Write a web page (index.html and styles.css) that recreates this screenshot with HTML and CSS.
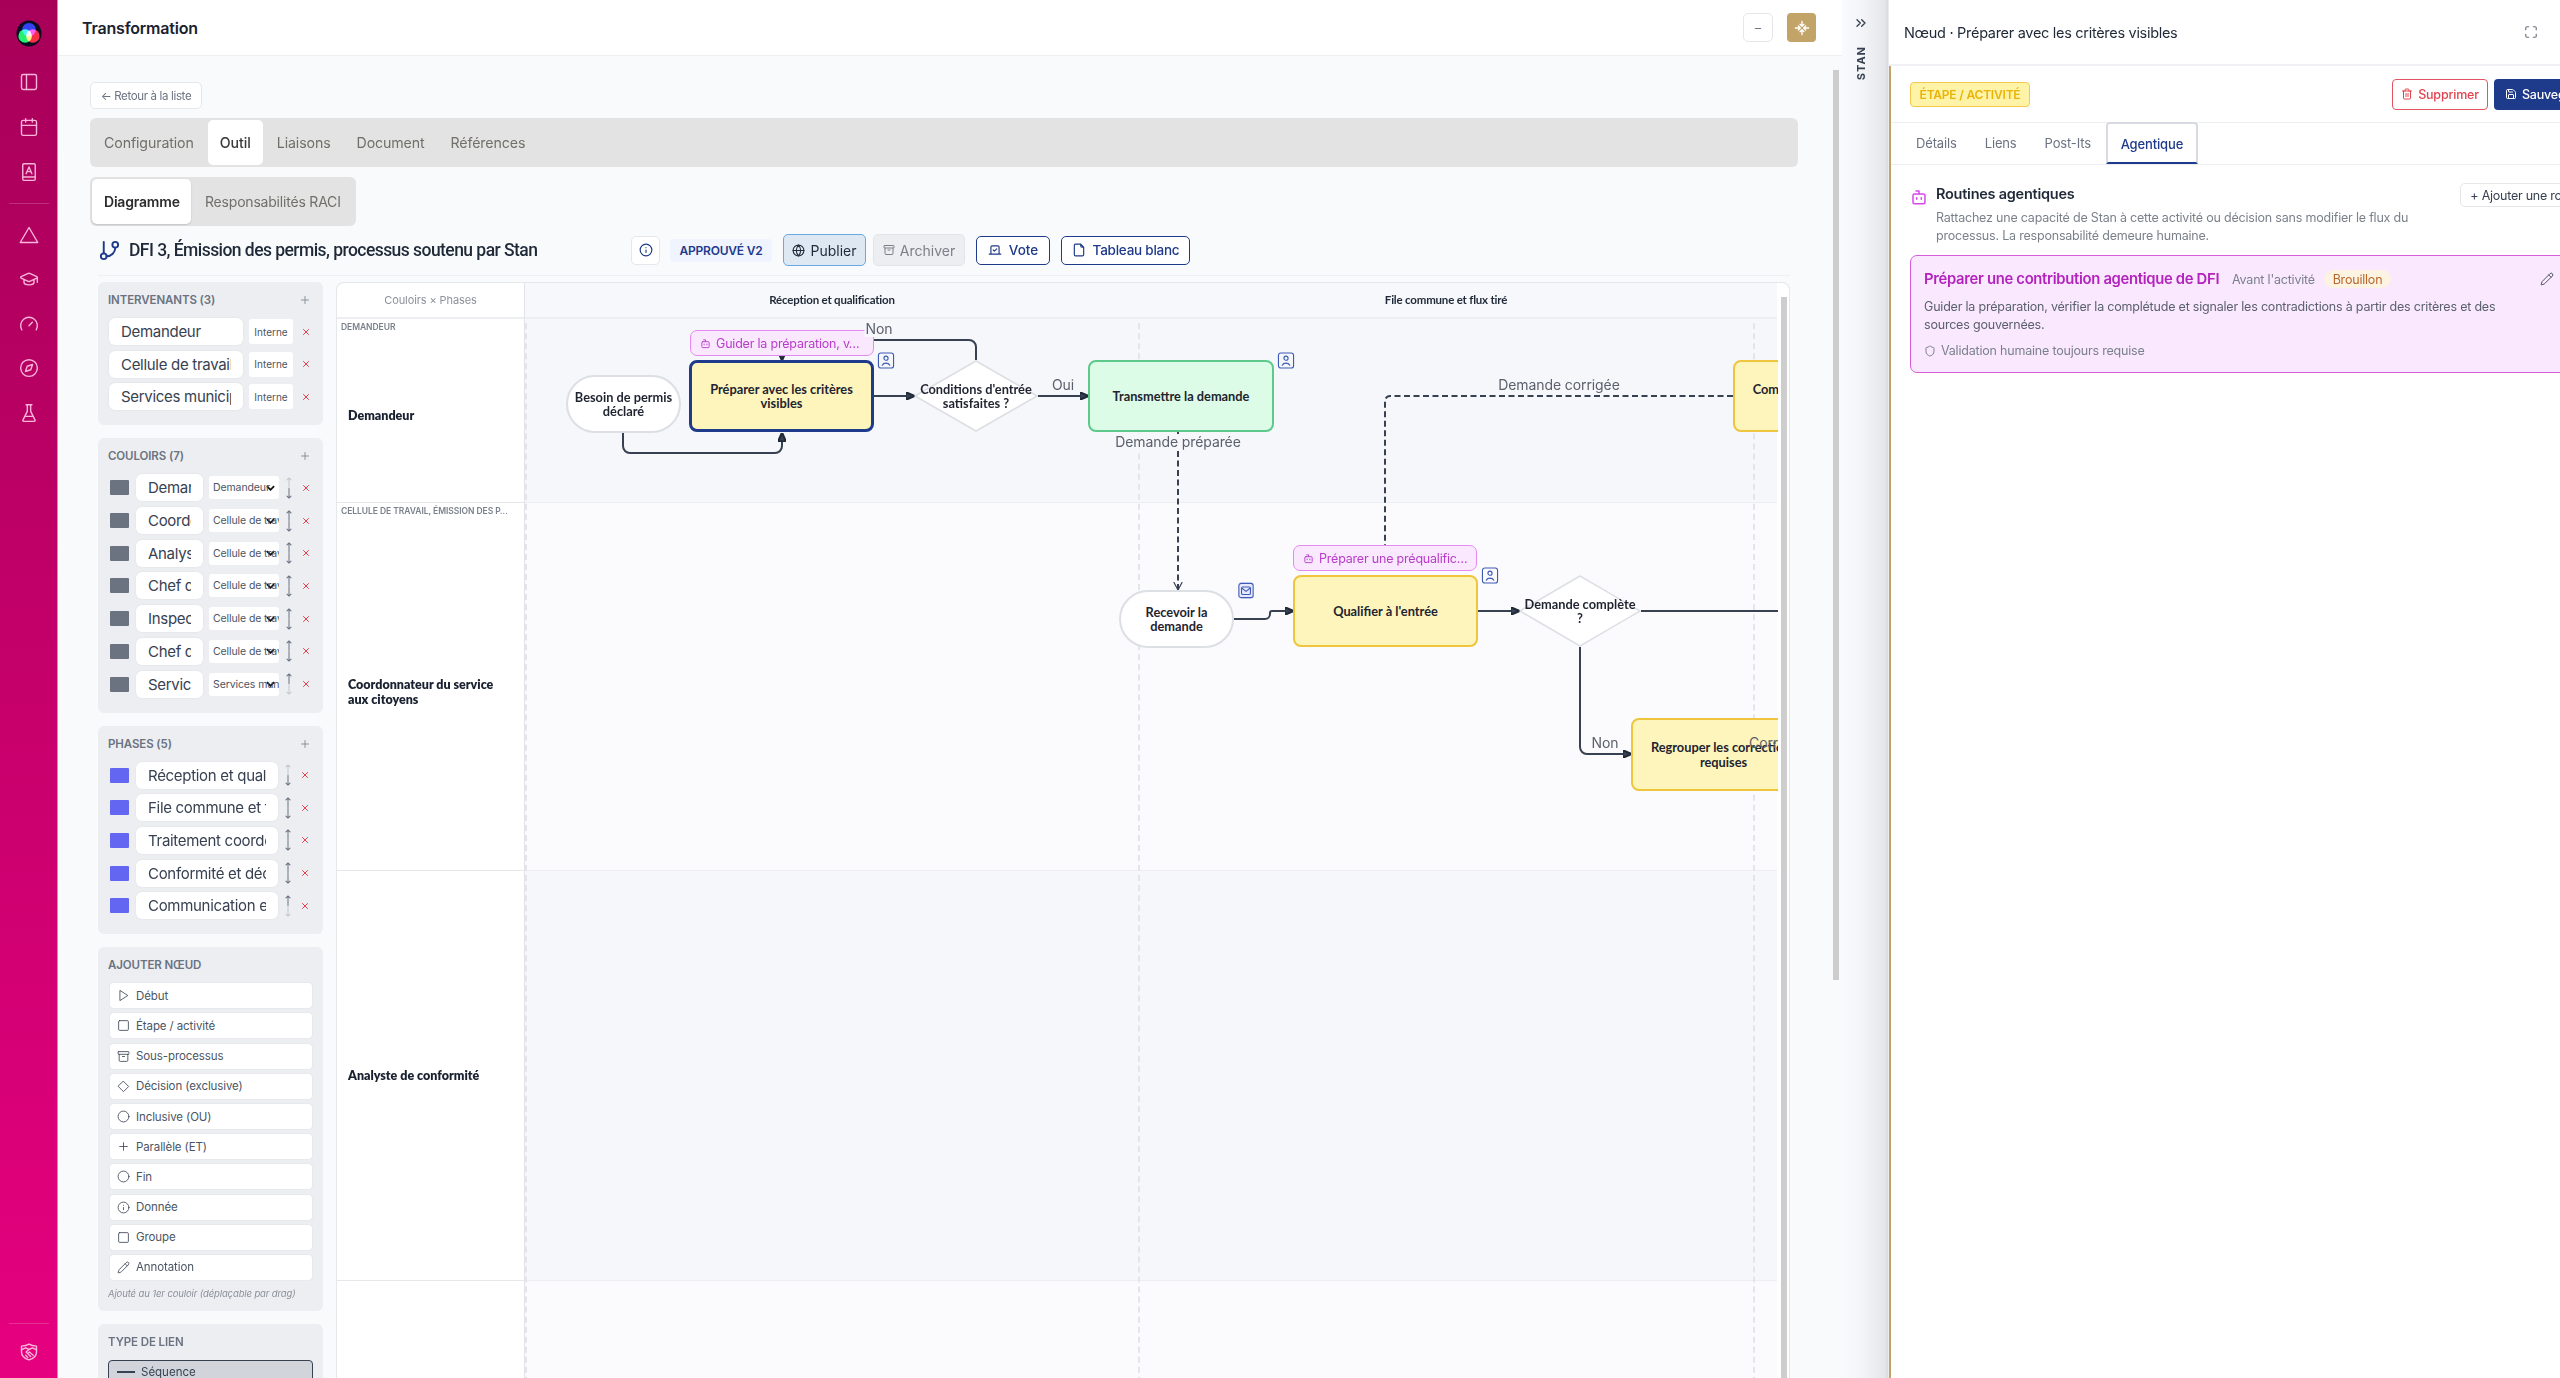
FILE: index.html
```html
<!DOCTYPE html>
<html lang="fr">
<head>
<meta charset="utf-8">
<title>Transformation</title>
<link rel="stylesheet" href="styles.css">
</head>
<body>
<svg class="sprite" aria-hidden="true">
  <symbol id="i-panel" viewBox="0 0 24 24"><rect x="3" y="3" width="18" height="18" rx="2"/><path d="M9 3v18"/></symbol>
  <symbol id="i-cal" viewBox="0 0 24 24"><rect x="3" y="4" width="18" height="18" rx="2"/><path d="M16 2v4M8 2v4M3 10h18"/></symbol>
  <symbol id="i-book" viewBox="0 0 24 24"><rect x="4.5" y="2" width="15" height="20" rx="1.5"/><path d="M4.5 18h15M8.5 14l3.500-8 3.500 8M9.800 11.500h4.400"/></symbol>
  <symbol id="i-tri" viewBox="0 0 24 24"><path d="M12 3 22.500 21h-21z"/></symbol>
  <symbol id="i-cap" viewBox="0 0 24 24"><path d="M21.420 10.922a1 1 0 0 0-.019-1.838L12.830 5.180a2 2 0 0 0-1.660 0L2.600 9.080a1 1 0 0 0 0 1.832l8.570 3.908a2 2 0 0 0 1.660 0zM22 10v6M6 12.500V16a6 3 0 0 0 12 0v-3.500"/></symbol>
  <symbol id="i-gauge" viewBox="0 0 24 24"><path d="m12 14 4-4M3.340 19a10 10 0 1 1 17.320 0"/></symbol>
  <symbol id="i-compass" viewBox="0 0 24 24"><circle cx="12" cy="12" r="10"/><path d="M16.240 7.760 14.120 14.120 7.760 16.240 9.880 9.880z"/></symbol>
  <symbol id="i-flask" viewBox="0 0 24 24"><path d="M10 2v7.527a2 2 0 0 1-.211.896L4.720 20.550a1 1 0 0 0 .9 1.450h12.760a1 1 0 0 0 .9-1.450l-5.069-10.127A2 2 0 0 1 14 9.527V2M8.500 2h7M7 16h10"/></symbol>
  <symbol id="i-shake" viewBox="0 0 24 24"><path d="M12 2.500c2.500 1.600 5.500 2.300 9 2.500v7c0 5-3.800 8-9 9.500C6.800 20 3 17 3 12V5c3.500-.2 6.500-.9 9-2.500z"/><path d="M3.500 9 8 7l4 2 4-2 4.500 2M12 9l-3.500 3 1.500 1.500 2.500-1.500 4.500 4M8 16l2.500 2.500M11 14.500l3 3"/></symbol>
  <symbol id="i-branch" viewBox="0 0 24 24"><path d="M6 3v12M18 9a9 9 0 0 1-9 9"/><circle cx="18" cy="6" r="3"/><circle cx="6" cy="18" r="3"/></symbol>
  <symbol id="i-info" viewBox="0 0 24 24"><circle cx="12" cy="12" r="10"/><path d="M12 16v-4M12 8h.01"/></symbol>
  <symbol id="i-globe" viewBox="0 0 24 24"><circle cx="12" cy="12" r="10"/><path d="M2 12h20M12 2a15.300 15.300 0 0 1 4 10 15.300 15.300 0 0 1-4 10 15.300 15.300 0 0 1-4-10 15.300 15.300 0 0 1 4-10z"/></symbol>
  <symbol id="i-archive" viewBox="0 0 24 24"><rect x="2" y="3" width="20" height="5" rx="1"/><path d="M4 8v11a2 2 0 0 0 2 2h12a2 2 0 0 0 2-2V8M10 12h4"/></symbol>
  <symbol id="i-vote" viewBox="0 0 24 24"><path d="m9 12 2 2 4-4M5 7a2 2 0 0 1 2-2h10a2 2 0 0 1 2 2v12H5zM22 19H2"/></symbol>
  <symbol id="i-page" viewBox="0 0 24 24"><path d="M15 2H6a2 2 0 0 0-2 2v16a2 2 0 0 0 2 2h12a2 2 0 0 0 2-2V7zM15 2v3a2 2 0 0 0 2 2h3"/></symbol>
  <symbol id="i-bot" viewBox="0 0 24 24"><path d="M12 8V4H8"/><rect x="4" y="8" width="16" height="13" rx="2"/><path d="M15 13v2M9 13v2"/></symbol>
  <symbol id="i-person" viewBox="0 0 18 18"><rect x="1" y="1" width="16" height="16" rx="2.500"/><circle cx="9" cy="6.500" r="2.200"/><path d="M5 14c1.500-3 6.500-3 8 0"/></symbol>
  <symbol id="i-mail" viewBox="0 0 18 18"><rect x="1" y="1" width="16" height="16" rx="2.500"/><rect x="4" y="5" width="10" height="8.500" rx="1.500"/><path d="m4.500 6.500 4.500 3.500 4.500-3.500"/></symbol>
  <symbol id="i-shrink" viewBox="0 0 24 24"><path d="M12 2v7M9 6.500 12 9.500l3-3M12 22v-7M9 17.500l3-3 3 3M2 12h7M6.500 9l3 3-3 3M22 12h-7M17.500 9l-3 3 3 3"/></symbol>
  <symbol id="i-full" viewBox="0 0 24 24"><path d="M8 3H5a2 2 0 0 0-2 2v3M21 8V5a2 2 0 0 0-2-2h-3M3 16v3a2 2 0 0 0 2 2h3M16 21h3a2 2 0 0 0 2-2v-3"/></symbol>
  <symbol id="i-trash" viewBox="0 0 24 24"><path d="M3 6h18M19 6v14a2 2 0 0 1-2 2H7a2 2 0 0 1-2-2V6M8 6V4a2 2 0 0 1 2-2h4a2 2 0 0 1 2 2v2M10 11v6M14 11v6"/></symbol>
  <symbol id="i-save" viewBox="0 0 24 24"><path d="M15.200 3a2 2 0 0 1 1.400.6l3.800 3.800a2 2 0 0 1 .6 1.400V19a2 2 0 0 1-2 2H5a2 2 0 0 1-2-2V5a2 2 0 0 1 2-2zM17 21v-7a1 1 0 0 0-1-1H8a1 1 0 0 0-1 1v7M7 3v4a1 1 0 0 0 1 1h7"/></symbol>
  <symbol id="i-shield" viewBox="0 0 24 24"><path d="M20 13c0 5-3.500 7.500-7.660 8.950a1 1 0 0 1-.67-.01C7.500 20.500 4 18 4 13V6a1 1 0 0 1 1-1c2 0 4.500-1.200 6.240-2.720a1.170 1.170 0 0 1 1.520 0C14.510 3.810 17 5 19 5a1 1 0 0 1 1 1z"/></symbol>
  <symbol id="i-pen" viewBox="0 0 24 24"><path d="M21.174 6.812a1 1 0 0 0-3.986-3.987L3.842 16.174a2 2 0 0 0-.5.830l-1.321 4.352a.5.5 0 0 0 .623.622l4.353-1.320a2 2 0 0 0 .830-.497zM15 5l4 4"/></symbol>
  <symbol id="i-play" viewBox="0 0 24 24"><path d="M6 3l14 9-14 9z"/></symbol>
  <symbol id="i-square" viewBox="0 0 24 24"><rect x="3" y="3" width="18" height="18" rx="2"/></symbol>
  <symbol id="i-diamond" viewBox="0 0 24 24"><path d="M12 2.500 21.500 12 12 21.500 2.500 12z"/></symbol>
  <symbol id="i-circle" viewBox="0 0 24 24"><circle cx="12" cy="12" r="10"/></symbol>
  <symbol id="i-plus" viewBox="0 0 24 24"><path d="M5 12h14M12 5v14"/></symbol>
  <symbol id="i-x" viewBox="0 0 24 24"><path d="M18 6 6 18M6 6l12 12"/></symbol>
  <symbol id="i-chev" viewBox="0 0 24 24"><path d="m6 17 5-5-5-5M13 17l5-5-5-5"/></symbol>
  <symbol id="i-arr-up" viewBox="0 0 8 12"><path d="M4 11.500V1M1.800 3.200 4 1l2.200 2.200"/></symbol>
  <symbol id="i-arr-down" viewBox="0 0 8 12"><path d="M4 .5V11M1.800 8.800 4 11l2.200-2.200"/></symbol>
</svg>

<div class="app">
  <nav class="rail">
    <div class="logo">
      <svg viewBox="0 0 26 28" class="logo-svg">
        <ellipse cx="13" cy="14" rx="13" ry="13.500" fill="#0b0b22"/>
        <circle class="lc" cx="13" cy="10" r="7" fill="#2a3bf0"/>
        <circle class="lc" cx="9" cy="16.500" r="7" fill="#1bf05a"/>
        <circle class="lc" cx="17" cy="16.500" r="7" fill="#f8262a"/>
      </svg>
    </div>
    <div class="rail-group g1">
      <svg class="ri"><use href="#i-panel"/></svg>
      <svg class="ri"><use href="#i-cal"/></svg>
      <svg class="ri"><use href="#i-book"/></svg>
    </div>
    <div class="rail-sep s1"></div>
    <div class="rail-group g2">
      <svg class="ri"><use href="#i-tri"/></svg>
      <svg class="ri"><use href="#i-cap"/></svg>
      <svg class="ri"><use href="#i-gauge"/></svg>
      <svg class="ri"><use href="#i-compass"/></svg>
      <svg class="ri"><use href="#i-flask"/></svg>
    </div>
    <div class="rail-foot">
      <div class="rail-sep"></div>
      <svg class="ri"><use href="#i-shake"/></svg>
    </div>
  </nav>

  <main class="main">
    <header class="topbar">
      <h1 class="page-title">Transformation</h1>
      <div class="top-actions">
        <button class="btn-min">–</button>
        <button class="btn-gold"><svg class="ic16"><use href="#i-shrink"/></svg></button>
      </div>
    </header>
    <div class="body">
      <button class="back">← Retour à la liste</button>
      <div class="tabs">
        <span class="tab">Configuration</span>
        <span class="tab on">Outil</span>
        <span class="tab">Liaisons</span>
        <span class="tab">Document</span>
        <span class="tab">Références</span>
      </div>
      <div class="subtabs">
        <span class="subtab on">Diagramme</span>
        <span class="subtab">Responsabilités RACI</span>
      </div>
      <div class="titlerow">
        <svg class="branch"><use href="#i-branch"/></svg>
        <h2 class="doc-title">DFI 3, Émission des permis, processus soutenu par Stan</h2>
        <div class="title-actions">
          <button class="btn-info"><svg class="ic14"><use href="#i-info"/></svg></button>
          <span class="badge-ok">APPROUVÉ V2</span>
          <button class="btn-pub"><svg class="ic13"><use href="#i-globe"/></svg>Publier</button>
          <button class="btn-arch"><svg class="ic12"><use href="#i-archive"/></svg>Archiver</button>
          <button class="btn-line vote"><svg class="ic14"><use href="#i-vote"/></svg>Vote</button>
          <button class="btn-line board"><svg class="ic14"><use href="#i-page"/></svg>Tableau blanc</button>
        </div>
      </div>

      <div class="work">
        <aside class="tools">
          <section class="box">
            <div class="box-h"><span>INTERVENANTS (3)</span><svg class="ic12 plus"><use href="#i-plus"/></svg></div>
            <div class="rows">
              <div class="row">
                <input class="inp w-actor" value="Demandeur"><select class="sel-plain"><option>Interne</option></select><svg class="ic10 del"><use href="#i-x"/></svg>
              </div>
              <div class="row">
                <input class="inp w-actor" value="Cellule de travail, Émission"><select class="sel-plain"><option>Interne</option></select><svg class="ic10 del"><use href="#i-x"/></svg>
              </div>
              <div class="row">
                <input class="inp w-actor" value="Services municipaux"><select class="sel-plain"><option>Interne</option></select><svg class="ic10 del"><use href="#i-x"/></svg>
              </div>
            </div>
          </section>

          <section class="box">
            <div class="box-h"><span>COULOIRS (7)</span><svg class="ic12 plus"><use href="#i-plus"/></svg></div>
            <div class="rows">
              <div class="row"><i class="sw gray"></i><input class="inp w-lane" value="Demandeur"><select class="sel"><option>Demandeur</option></select><span class="mv"><svg class="fade"><use href="#i-arr-up"/></svg><svg><use href="#i-arr-down"/></svg></span><svg class="ic10 del"><use href="#i-x"/></svg></div>
              <div class="row"><i class="sw gray"></i><input class="inp w-lane" value="Coordonnateur"><select class="sel"><option>Cellule de travail</option></select><span class="mv"><svg><use href="#i-arr-up"/></svg><svg><use href="#i-arr-down"/></svg></span><svg class="ic10 del"><use href="#i-x"/></svg></div>
              <div class="row"><i class="sw gray"></i><input class="inp w-lane" value="Analyste de conformité"><select class="sel"><option>Cellule de travail</option></select><span class="mv"><svg><use href="#i-arr-up"/></svg><svg><use href="#i-arr-down"/></svg></span><svg class="ic10 del"><use href="#i-x"/></svg></div>
              <div class="row"><i class="sw gray"></i><input class="inp w-lane" value="Chef de service"><select class="sel"><option>Cellule de travail</option></select><span class="mv"><svg><use href="#i-arr-up"/></svg><svg><use href="#i-arr-down"/></svg></span><svg class="ic10 del"><use href="#i-x"/></svg></div>
              <div class="row"><i class="sw gray"></i><input class="inp w-lane" value="Inspecteur"><select class="sel"><option>Cellule de travail</option></select><span class="mv"><svg><use href="#i-arr-up"/></svg><svg><use href="#i-arr-down"/></svg></span><svg class="ic10 del"><use href="#i-x"/></svg></div>
              <div class="row"><i class="sw gray"></i><input class="inp w-lane" value="Chef de division"><select class="sel"><option>Cellule de travail</option></select><span class="mv"><svg><use href="#i-arr-up"/></svg><svg><use href="#i-arr-down"/></svg></span><svg class="ic10 del"><use href="#i-x"/></svg></div>
              <div class="row"><i class="sw gray"></i><input class="inp w-lane" value="Services municipaux"><select class="sel"><option>Services municipaux</option></select><span class="mv"><svg><use href="#i-arr-up"/></svg><svg class="fade"><use href="#i-arr-down"/></svg></span><svg class="ic10 del"><use href="#i-x"/></svg></div>
            </div>
          </section>

          <section class="box">
            <div class="box-h"><span>PHASES (5)</span><svg class="ic12 plus"><use href="#i-plus"/></svg></div>
            <div class="rows">
              <div class="row"><i class="sw blue"></i><input class="inp w-phase" value="Réception et qualification"><span class="mv"><svg class="fade"><use href="#i-arr-up"/></svg><svg><use href="#i-arr-down"/></svg></span><svg class="ic10 del"><use href="#i-x"/></svg></div>
              <div class="row"><i class="sw blue"></i><input class="inp w-phase" value="File commune et flux tiré"><span class="mv"><svg><use href="#i-arr-up"/></svg><svg><use href="#i-arr-down"/></svg></span><svg class="ic10 del"><use href="#i-x"/></svg></div>
              <div class="row"><i class="sw blue"></i><input class="inp w-phase" value="Traitement coordonné"><span class="mv"><svg><use href="#i-arr-up"/></svg><svg><use href="#i-arr-down"/></svg></span><svg class="ic10 del"><use href="#i-x"/></svg></div>
              <div class="row"><i class="sw blue"></i><input class="inp w-phase" value="Conformité et décision"><span class="mv"><svg><use href="#i-arr-up"/></svg><svg><use href="#i-arr-down"/></svg></span><svg class="ic10 del"><use href="#i-x"/></svg></div>
              <div class="row"><i class="sw blue"></i><input class="inp w-phase" value="Communication et clôture"><span class="mv"><svg><use href="#i-arr-up"/></svg><svg class="fade"><use href="#i-arr-down"/></svg></span><svg class="ic10 del"><use href="#i-x"/></svg></div>
            </div>
          </section>

          <section class="box box-add">
            <div class="box-h"><span>AJOUTER NŒUD</span></div>
            <div class="adds">
              <button class="add"><svg class="ic13"><use href="#i-play"/></svg>Début</button>
              <button class="add"><svg class="ic13"><use href="#i-square"/></svg>Étape / activité</button>
              <button class="add"><svg class="ic13"><use href="#i-archive"/></svg>Sous-processus</button>
              <button class="add"><svg class="ic13"><use href="#i-diamond"/></svg>Décision (exclusive)</button>
              <button class="add"><svg class="ic13"><use href="#i-circle"/></svg>Inclusive (OU)</button>
              <button class="add"><svg class="ic13"><use href="#i-plus"/></svg>Parallèle (ET)</button>
              <button class="add"><svg class="ic13"><use href="#i-circle"/></svg>Fin</button>
              <button class="add"><svg class="ic13"><use href="#i-info"/></svg>Donnée</button>
              <button class="add"><svg class="ic13"><use href="#i-square"/></svg>Groupe</button>
              <button class="add"><svg class="ic13"><use href="#i-pen"/></svg>Annotation</button>
            </div>
            <p class="hint">Ajouté au 1er couloir (déplaçable par drag)</p>
          </section>

          <section class="box">
            <div class="box-h"><span>TYPE DE LIEN</span></div>
            <button class="link-type"><i class="dash"></i>Séquence</button>
          </section>
        </aside>

        <div class="dg">
          <div class="dg-corner">Couloirs × Phases</div>
          <div class="dg-phases">
            <span class="ph">Réception et qualification</span>
            <span class="ph">File commune et flux tiré</span>
          </div>

          <div class="lab"><small>DEMANDEUR</small><strong>Demandeur</strong></div>
          <div class="lane a"></div>
          <div class="lab"><small>CELLULE DE TRAVAIL, ÉMISSION DES P…</small><strong>Coordonnateur du service aux citoyens</strong></div>
          <div class="lane b"></div>
          <div class="lab"><strong>Analyste de conformité</strong></div>
          <div class="lane a"></div>
          <div class="lab"></div>
          <div class="lane b"></div>

          <div class="canvas">
            <i class="vline v1"></i><i class="vline v2"></i><i class="vline v3"></i>
            <svg class="edges" viewBox="525 319 1253 1100">
              <defs>
                <marker id="ah" markerWidth="9" markerHeight="8" refX="8.500" refY="4" orient="auto" markerUnits="userSpaceOnUse"><path d="M0 0 9 4 0 8z" fill="#374151"/></marker>
                <marker id="oh" markerWidth="9" markerHeight="10" refX="8.500" refY="5" orient="auto" markerUnits="userSpaceOnUse"><path d="M1 1 8.500 5 1 9" fill="none" stroke="#374151" stroke-width="1.200"/></marker>
              </defs>
              <path class="e" d="M623 433v13a7 7 0 0 0 7 7h145a7 7 0 0 0 7-7v-13" marker-end="url(#ah)"/>
              <path class="e" d="M874 396h40" marker-end="url(#ah)"/>
              <path class="e" d="M976 360v-13a7 7 0 0 0-7-7H782v20" marker-end="url(#ah)"/>
              <path class="e" d="M1038 396h50" marker-end="url(#ah)"/>
              <path class="e dashed" d="M1178 432V590" marker-end="url(#oh)"/>
              <path class="e dashed" d="M1733 396H1390a5 5 0 0 0-5 5v144"/>
              <path class="e" d="M1234 619h31a5 5 0 0 0 5-5v-1a2 2 0 0 1 2-2h21" marker-end="url(#ah)"/>
              <path class="e" d="M1478 611h41" marker-end="url(#ah)"/>
              <path class="e" d="M1641 611H1778"/>
              <path class="e" d="M1580 647v100a7 7 0 0 0 7 7h44" marker-end="url(#ah)"/>
            </svg>

            <div class="node pill n1">Besoin de permis déclaré</div>
            <div class="node task sel-node n2">Préparer avec les critères visibles</div>
            <div class="tag t1"><svg class="ic11"><use href="#i-bot"/></svg><span>Guider la préparation, v…</span></div>
            <svg class="pb b1"><use href="#i-person"/></svg>
            <div class="node diamond n3"><svg viewBox="0 0 124 72" preserveAspectRatio="none"><path d="M62 1 123 36 62 71 1 36z"/></svg><span>Conditions d'entrée satisfaites ?</span></div>
            <div class="node green n4">Transmettre la demande</div>
            <svg class="pb b2"><use href="#i-person"/></svg>
            <div class="node task n5">Compléter les corrections demandées</div>
            <div class="node pill n6">Recevoir la demande</div>
            <svg class="pb b3"><use href="#i-mail"/></svg>
            <div class="node task n7">Qualifier à l'entrée</div>
            <div class="tag t2"><svg class="ic11"><use href="#i-bot"/></svg><span>Préparer une préqualific…</span></div>
            <svg class="pb b4"><use href="#i-person"/></svg>
            <div class="node diamond n8"><svg viewBox="0 0 124 72" preserveAspectRatio="none"><path d="M62 1 123 36 62 71 1 36z"/></svg><span>Demande complète<br>?</span></div>
            <div class="node task n9">Regrouper les corrections requises</div>

            <span class="el l1">Non</span>
            <span class="el l2">Oui</span>
            <span class="el l3">Demande préparée</span>
            <span class="el l4">Demande corrigée</span>
            <span class="el l5">Non</span>
            <span class="el l6">Corrections</span>
          </div>
          <div class="dg-scroll"><i></i></div>
        </div>
      </div>
    </div>
    <div class="main-scroll"><i></i></div>
  </main>

  <div class="stan">
    <svg class="chev"><use href="#i-chev"/></svg>
    <span class="stan-t">STAN</span>
  </div>

  <aside class="panel">
    <header class="p-head">
      <span>Nœud · Préparer avec les critères visibles</span>
      <svg class="ic14 full"><use href="#i-full"/></svg>
    </header>
    <div class="p-wrap">
      <div class="p-bar">
        <span class="p-badge">ÉTAPE / ACTIVITÉ</span>
        <div class="p-btns">
          <button class="b-del"><svg class="ic12"><use href="#i-trash"/></svg>Supprimer</button>
          <button class="b-save"><svg class="ic12"><use href="#i-save"/></svg>Sauvegarder</button>
        </div>
      </div>
      <div class="p-tabs">
        <span class="p-tab">Détails</span>
        <span class="p-tab">Liens</span>
        <span class="p-tab">Post-Its</span>
        <span class="p-tab on">Agentique</span>
      </div>
      <div class="p-body">
        <div class="r-head">
          <svg class="r-bot"><use href="#i-bot"/></svg>
          <div class="r-txt">
            <h3>Routines agentiques</h3>
            <p>Rattachez une capacité de Stan à cette activité ou décision sans modifier le flux du processus. La responsabilité demeure humaine.</p>
          </div>
          <button class="b-add">+ Ajouter une routine</button>
        </div>
        <article class="card">
          <div class="card-h">
            <strong>Préparer une contribution agentique de DFI</strong>
            <span class="when">Avant l'activité</span>
            <span class="draft">Brouillon</span>
            <svg class="ic14 pen"><use href="#i-pen"/></svg>
          </div>
          <p>Guider la préparation, vérifier la complétude et signaler les contradictions à partir des critères et des sources gouvernées.</p>
          <div class="card-f"><svg class="ic12"><use href="#i-shield"/></svg>Validation humaine toujours requise</div>
        </article>
      </div>
    </div>
  </aside>
</div>
</body>
</html>
```

FILE: styles.css
```css
* { box-sizing: border-box; }
html, body { margin: 0; height: 100%; overflow: hidden; }
body { font-family: "Inter", "Liberation Sans", sans-serif; color: #1f2937; background: #fff; }
button, input, select { font-family: inherit; }
.sprite { position: absolute; width: 0; height: 0; }
svg { fill: none; stroke: currentColor; stroke-width: 2; stroke-linecap: round; stroke-linejoin: round; flex: none; }
.ic10 { width: 10px; height: 10px; }
.ic11 { width: 11px; height: 11px; }
.ic12 { width: 12px; height: 12px; }
.ic13 { width: 13px; height: 13px; }
.ic14 { width: 14px; height: 14px; }
.ic16 { width: 16px; height: 16px; }

.app { display: grid; grid-template-columns: 58px 1784px 47px 671px; height: 1378px; overflow: hidden; }

/* rail */
.rail { background: linear-gradient(180deg, #a80059 0%, #b80063 30%, #c9006d 55%, #e6007f 100%); border-right: 1px solid #f47ab8; display: flex; flex-direction: column; align-items: center; color: #f8b4d9; padding-top: 20px; }
.logo { height: 27px; }
.logo-svg { width: 26px; height: 27px; stroke: none; display: block; }
.lc { mix-blend-mode: screen; filter: blur(.7px); }
.ri { width: 20px; height: 20px; stroke-width: 1.700; display: block; }
.rail-group { display: flex; flex-direction: column; gap: 24.800px; }
.g1 { margin-top: 25px; }
.g2 { margin-top: 21px; gap: 24.500px; }
.rail-sep { width: 40px; height: 1px; background: rgba(255,255,255,.18); }
.s1 { margin-top: 21px; }
.rail-foot { margin-top: auto; padding-bottom: 16px; display: flex; flex-direction: column; align-items: center; gap: 18px; }

/* main */
.main { position: relative; background: #f8fafc; overflow: hidden; display: flex; flex-direction: column; }
.topbar { height: 56px; flex: none; background: #fff; border-bottom: 1px solid #eef0f3; display: flex; align-items: center; justify-content: space-between; padding: 0 26px 0 24px; }
.page-title { margin: 0; font-size: 16px; font-weight: 600; color: #1a2130; letter-spacing: -.2px; }
.top-actions { display: flex; gap: 14px; height: 29px; }
.btn-min { width: 30px; border: 1px solid #e5e7eb; border-radius: 5px; background: #fff; color: #6b7280; font-size: 12px; padding: 0; }
.btn-gold { width: 29px; border: 0; border-radius: 4px; background: #c2a468; color: #fff; padding: 0; display: flex; align-items: center; justify-content: center; }

.body { flex: 1; min-height: 0; padding: 26px 44px 0 32px; display: flex; flex-direction: column; }
.back { align-self: flex-start; width: 112px; height: 27px; background: #fff; border: 1px solid #e5e7eb; border-radius: 5px; font-size: 11.500px; color: #6b7280; padding: 0; letter-spacing: -.35px; }
.tabs { margin-top: 9px; height: 49px; background: #e3e3e3; border-radius: 6px; display: flex; align-items: center; padding: 0 0 0 1px; flex: none; }
.tab { font-size: 14.200px; color: #716f69; line-height: 45px; height: 45px; padding: 0 13px; letter-spacing: -.12px; }
.tab.on { background: #fff; color: #3b3b3b; border-radius: 5px; width: 55px; padding: 0; text-align: center; margin: 0 1px; font-weight: 500; }
.subtabs { margin-top: 10px; height: 49px; width: 266px; background: #e3e3e3; border-radius: 6px; display: flex; align-items: center; padding: 0 2px; flex: none; }
.subtab { font-size: 14px; line-height: 45px; height: 45px; padding: 0 14px; color: #716f69; white-space: nowrap; letter-spacing: -.2px; }
.subtab.on { background: #fff; color: #2c2c2c; font-weight: 600; border-radius: 5px; box-shadow: 0 1px 2px rgba(0,0,0,.15); width: 99px; padding: 0 12px; }

.titlerow { margin-top: 8px; height: 32px; flex: none; display: flex; align-items: center; padding-left: 8px; position: relative; }
.branch { width: 23px; height: 23px; color: #1e3a8a; }
.doc-title { margin: 0 0 0 8px; font-family: "Roboto", sans-serif; font-size: 17.500px; font-weight: 500; color: #1f2937; letter-spacing: -.55px; white-space: nowrap; width: 502px; }
.title-actions { display: flex; align-items: center; }
.btn-info { width: 29px; height: 29px; background: #fff; border: 1px solid #e5e7eb; border-radius: 5px; color: #1e3a8a; padding: 0; display: flex; align-items: center; justify-content: center; }
.badge-ok { margin-left: 10px; width: 102px; height: 23px; background: #eff4fe; color: #1e3a8a; border-radius: 4px; font-size: 12px; font-weight: 600; display: flex; align-items: center; justify-content: center; letter-spacing: -.2px; }
.btn-pub, .btn-arch, .btn-line { display: flex; align-items: center; justify-content: center; gap: 5px; padding: 0; font-size: 14px; border-radius: 5px; white-space: nowrap; }
.btn-pub { margin-left: 11px; width: 83px; height: 32px; background: #dde8f3; border: 1px solid #69a7e6; color: #1f2937; }
.btn-arch { margin-left: 7px; width: 92px; height: 32px; background: #eceef1; border: 1px solid #e2e4e8; color: #7b8088; }
.btn-line { height: 29px; background: #fff; border: 1px solid #1e3a8a; color: #1e3a8a; font-weight: 500; font-size: 13.500px; }
.vote { margin-left: 11px; width: 74px; gap: 7px; }
.board { margin-left: 11px; width: 129px; gap: 7px; letter-spacing: -.25px; }

.work { margin-top: 16px; margin-left: 8px; flex: 1; min-height: 0; display: flex; gap: 13px; position: relative; }
.work::before { content: ""; position: absolute; left: 0; right: 8px; top: -7px; height: 1px; background: #eef0f3; }

/* tools */
.tools { width: 225px; flex: none; display: flex; flex-direction: column; gap: 13px; }
.box { background: #eceef2; border-radius: 6px; padding: 10px 10px 15px; flex: none; }
.box-add { padding-bottom: 11px; }
.box-h { height: 16px; display: flex; justify-content: space-between; align-items: center; font-size: 11.500px; font-weight: 600; color: #6b7280; padding-right: 2px; margin-bottom: 10px; letter-spacing: -.1px; }
.plus { color: #8b919b; }
.rows { display: flex; flex-direction: column; gap: 5.700px; }
.row { height: 27px; display: flex; align-items: center; padding-left: 1px; }
.inp { height: 27px; background: #fff; border: 0; border-radius: 6px; box-shadow: 0 0 2px rgba(0,0,0,.08); font-size: 15px; color: #374151; padding: 0 12px; outline: none; min-width: 0; letter-spacing: -.3px; }
.w-actor { width: 134px; }
.w-lane { width: 67px; margin-left: 7px; }
.w-phase { width: 142px; margin-left: 7px; }
.sw { width: 19px; height: 15px; flex: none; margin-left: 1px; display: block; border-radius: 1px; }
.gray { background: #6b7280; }
.blue { background: #6366f1; }
.sel-plain { appearance: none; margin-left: 6px; width: 44px; height: 25px; background: #fff; border: 0; border-radius: 3px; font-size: 10px; color: #4b5563; padding: 0 4px; text-align: center; }
.sel { appearance: none; margin-left: 6px; width: 70px; height: 23px; border: 0; border-radius: 3px; font-size: 10.500px; color: #4b5563; padding: 0 0 0 4px; letter-spacing: -.1px; background: #fff url("data:image/svg+xml,%3Csvg xmlns='http://www.w3.org/2000/svg' viewBox='0 0 10 6'%3E%3Cpath d='M1 1l4 4 4-4' fill='none' stroke='%23111' stroke-width='2'/%3E%3C/svg%3E") no-repeat right 4px center / 9px 6px; }
.del { color: #e0404f; margin-left: 8px; stroke-width: 2.400; }
.mv { display: flex; flex-direction: column; width: 8px; margin-left: 6px; color: #6b7280; flex: none; height: 22px; }
.mv svg { width: 8px; height: 11px; stroke-width: 1.100; }
.mv .fade { opacity: .3; }
.adds { display: flex; flex-direction: column; gap: 5.200px; }
.add { height: 25px; width: 202px; margin-left: 2px; background: #fff; border: 0; border-radius: 3px; box-shadow: 0 0 1px rgba(0,0,0,.2); display: flex; align-items: center; gap: 6px; padding: 0 0 0 7px; font-size: 11.500px; color: #4b5563; letter-spacing: -.1px; text-align: left; }
.add svg { color: #374151; stroke-width: 1.500; }
.hint { margin: 8px 0 0; font-size: 9.500px; font-style: italic; color: #8b919b; line-height: 12px; letter-spacing: -.12px; }
.link-type { width: 205px; height: 30px; background: #d1d5db; border: 1px solid #374151; border-radius: 4px; display: flex; align-items: center; gap: 6px; padding: 0 0 6px 8px; font-size: 11.500px; color: #374151; }
.dash { width: 18px; height: 2px; background: #374151; }

/* diagram */
.dg { position: relative; width: 1454px; height: 1100px; background: #fff; border: 1px solid #e5e7eb; border-bottom: 0; border-radius: 8px 8px 0 0; display: grid; grid-template-columns: 188px 1fr; grid-template-rows: 36px 184px 368px 410px 1fr; overflow: hidden; }
.dg-corner { border-right: 1px solid #e1e3e8; border-bottom: 2px solid #eceef1; display: flex; align-items: center; justify-content: center; font-size: 11px; color: #8b919b; letter-spacing: -.1px; }
.dg-phases { display: flex; background: #f7f8fb; border-bottom: 2px solid #eceef1; margin-right: 12px; }
.ph { font-size: 11.500px; font-weight: 700; color: #1f2937; text-align: center; line-height: 34px; letter-spacing: -.2px; font-family: "Lato", sans-serif; width: 614px; flex: none; }
.lab { border-right: 1px solid #e1e3e8; border-bottom: 1px solid #e5e7eb; display: flex; flex-direction: column; padding: 3px 4px; background: #fff; }
.lab small { font-size: 8.500px; font-weight: 600; color: #7b818b; white-space: nowrap; line-height: 10px; letter-spacing: -.05px; }
.lab strong { flex: 1; display: flex; align-items: center; padding: 0 7px; font-family: "Lato", sans-serif; font-size: 12.500px; font-weight: 800; line-height: 15px; color: #1a2130; }
.lane { border-bottom: 1px solid #eceef2; margin-right: 12px; }
.lane.a { background: #f5f7fb; }
.lane.b { background: #fbfbfe; }
.dg-scroll { position: absolute; right: 2px; top: 14px; bottom: 0; width: 6px; }
.dg-scroll i { display: block; height: 100%; background: #cdcdcd; }
.canvas { position: absolute; left: 188px; top: 36px; width: 1253px; height: 1100px; overflow: hidden; }
.edges { position: absolute; inset: 0; width: 1253px; height: 1100px; }
.e { stroke: #374151; stroke-width: 2; fill: none; stroke-linecap: butt; }
.dashed { stroke-dasharray: 6 3.500; }
.vline { position: absolute; top: -36px; height: 1140px; width: 0; border-left: 2px dashed #e3e5eb; }
.v1 { left: 0; }
.v2 { left: 613px; }
.v3 { left: 1228px; }
.node { position: absolute; display: flex; align-items: center; justify-content: center; text-align: center; font-family: "Lato", sans-serif; font-size: 12.800px; font-weight: 700; line-height: 14.500px; color: #1f2430; padding: 0 12px; }
.pill { width: 115px; height: 58px; border-radius: 29px; background: #fff; border: 2px solid #dcdfe4; padding: 0 4px; }
.task { width: 185px; height: 72px; border-radius: 8px; background: #fef5bd; border: 2px solid #eec53c; }
.sel-node { border: 3px solid #1e3a8a; }
.green { width: 186px; height: 72px; border-radius: 8px; background: #dcfce7; border: 2px solid #5dc98a; }
.diamond { width: 124px; height: 72px; padding: 0; }
.diamond svg { position: absolute; inset: 0; width: 100%; height: 100%; fill: #fff; stroke: #dcdfe4; stroke-width: 1.500; }
.diamond span { position: relative; width: 116px; }
.n1 { left: 41px; top: 56px; }
.n2 { left: 164px; top: 41px; }
.n3 { left: 389px; top: 41px; }
.n4 { left: 563px; top: 41px; }
.n5 { left: 1208px; top: 41px; padding: 0 16px; }
.n6 { left: 594px; top: 271px; }
.n7 { left: 768px; top: 256px; }
.n8 { left: 994px; top: 256px; width: 122px; }
.n9 { left: 1106px; top: 399px; height: 73px; }
.tag { position: absolute; width: 184px; height: 26px; background: #fae8ff; border: 1.500px solid #e58af0; border-radius: 7px; display: flex; align-items: center; gap: 5px; padding-left: 9px; font-size: 12.500px; color: #b83cc9; white-space: nowrap; letter-spacing: -.2px; }
.t1 { left: 165px; top: 11px; }
.t2 { left: 768px; top: 226px; }
.pb { position: absolute; width: 18px; height: 17px; color: #3f5bb5; stroke-width: 1.200; }
.b1 { left: 352px; top: 33px; }
.b2 { left: 752px; top: 33px; }
.b3 { left: 713px; top: 263px; background: #e6e9fb; border-radius: 3px; width: 16px; }
.b4 { left: 956px; top: 248px; }
.el { position: absolute; font-size: 14px; color: #5b616c; line-height: 16px; white-space: nowrap; letter-spacing: -.1px; transform: translate(-50%, -50%); padding: 0 1px; }
.l1 { left: 354px; top: 10px; background: #f5f7fb; }
.l2 { left: 538px; top: 66px; background: #f5f7fb; }
.l3 { left: 653px; top: 123px; background: #f5f7fb; }
.l4 { left: 1034px; top: 66px; background: #f5f7fb; }
.l5 { left: 1080px; top: 424px; background: #fbfbfe; }
.l6 { left: 1223px; top: 424px; transform: translate(0, -50%); }

.main-scroll { position: absolute; right: 3px; top: 56px; width: 6px; }
.main-scroll i { display: block; margin-top: 14px; height: 910px; background: #cdcdcd; }

/* stan */
.stan { background: linear-gradient(90deg, #f9fafc 0%, #f4f5f8 40%, #e4e6ea 92%, #d6d9df 96%, #f1f2f4 100%); display: flex; flex-direction: column; align-items: center; padding: 15px 9px 0 0; }
.chev { width: 16px; height: 16px; color: #374151; }
.stan-t { margin-top: 15px; writing-mode: vertical-rl; transform: rotate(180deg); font-size: 11px; font-weight: 700; color: #374151; letter-spacing: 1px; }

/* panel */
.panel { background: #fff; display: flex; flex-direction: column; overflow: hidden; min-width: 0; }
.p-head { height: 66px; flex: none; border-bottom: 2px solid #eff1f4; display: flex; align-items: center; justify-content: space-between; padding: 0 22px 0 15px; font-size: 14.500px; color: #1f2937; letter-spacing: -.3px; }
.full { color: #6b7280; }
.p-wrap { flex: 1; border-left: 2px solid #c2a468; width: 760px; }
.p-bar { height: 57px; display: flex; align-items: center; padding: 0 19px; border-bottom: 1px solid #eceef1; }
.p-badge { width: 120px; height: 25px; background: #fef3a6; border: 1px solid #f2c94c; border-radius: 4px; color: #eab308; font-size: 12px; font-weight: 600; display: flex; align-items: center; justify-content: center; letter-spacing: -.2px; }
.p-btns { display: flex; gap: 6px; margin-left: 362px; }
.b-del, .b-save { height: 31px; border-radius: 4px; display: flex; align-items: center; gap: 5px; font-size: 12.500px; font-weight: 500; padding: 0; letter-spacing: -.2px; flex: none; }
.b-del { width: 96px; background: #fff; border: 1px solid #e25563; color: #e2434f; justify-content: center; }
.b-save { width: 132px; background: #1e3a8a; border: 0; color: #fff; padding-left: 11px; }
.p-tabs { height: 42px; border-bottom: 1px solid #eceef1; display: flex; padding-left: 18px; gap: 14px; }
.p-tab { font-size: 13px; color: #6b7280; line-height: 41px; padding: 0 7px; letter-spacing: -.15px; }
.p-tab.on { width: 92px; height: 42px; padding: 0; margin: -1px 0 0 -6px; text-align: center; color: #1e3a8a; border: 2px solid #d7dae0; border-bottom: 2px solid #1e3a8a; border-radius: 4px 4px 0 0; font-weight: 500; line-height: 40px; }
.p-body { padding: 18px 19px; }
.r-head { display: flex; align-items: flex-start; height: 72px; }
.r-bot { width: 18px; height: 18px; color: #d946ef; margin-top: 5px; }
.r-txt { margin-left: 8px; width: 524px; }
.r-txt h3 { margin: 0; font-size: 14.500px; font-weight: 600; color: #1f2937; line-height: 22px; letter-spacing: -.25px; }
.r-txt p { margin: 4px 0 0; width: 490px; font-size: 12.500px; line-height: 17.500px; color: #7b818b; letter-spacing: -.2px; }
.b-add { flex: none; height: 24px; width: 140px; background: #fff; border: 1px solid #e5e7eb; border-radius: 5px; font-size: 12.500px; color: #374151; padding: 0; letter-spacing: -.25px; white-space: nowrap; }
.card { width: 666px; height: 118px; background: #fae8ff; border: 1px solid #d65bdd; border-radius: 7px; padding: 13px; }
.card-h { display: flex; align-items: center; height: 20px; position: relative; white-space: nowrap; }
.card-h strong { font-size: 14.800px; font-weight: 600; color: #b323bd; letter-spacing: -.3px; width: 300px; }
.when { font-size: 12.500px; color: #7b818b; margin-left: 8px; letter-spacing: -.2px; width: 84px; }
.draft { font-size: 12.500px; margin-left: 8px; background: #fdf3e3; color: #b8672c; border-radius: 9px; width: 67px; height: 18px; display: flex; align-items: center; justify-content: center; letter-spacing: -.2px; }
.pen { position: absolute; left: 616px; top: 3px; color: #374151; stroke-width: 1.500; }
.card p { margin: 9px 0 0; width: 590px; font-size: 12.500px; line-height: 18px; color: #5b616c; letter-spacing: -.2px; }
.card-f { margin-top: 9px; display: flex; align-items: center; gap: 5px; font-size: 12.500px; color: #7b818b; letter-spacing: -.2px; }
```
